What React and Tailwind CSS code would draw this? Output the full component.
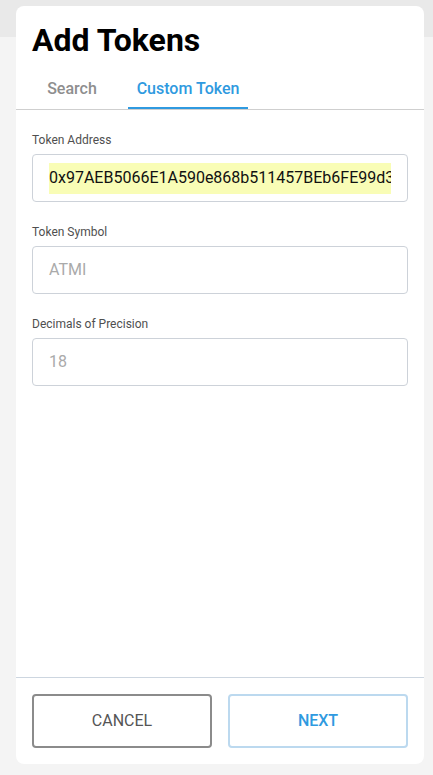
import React from 'react';

const Field = ({ label, children }) => (
  <div className="mb-[22px]">
    <div className="text-[12px] leading-4 text-[#4f4f4f]">{label}</div>
    <div className="mt-[6px] h-[48px] rounded-[4px] border border-[#cdd2d9] px-4 flex items-center overflow-hidden">
      {children}
    </div>
  </div>
);

const App = () => {
  return (
    <div className="min-h-screen bg-[linear-gradient(#e9e9e9_37px,#f4f4f4_37px)] pt-[6px] font-['Roboto',sans-serif]">
      <div className="ml-4 w-[408px] h-[758px] rounded-[8px] bg-white flex flex-col">
        <h1 className="px-4 pt-[18px] text-[32px] leading-8 font-bold text-black">Add Tokens</h1>

        <div className="mt-[14px] flex border-b border-[#cfcfcf]">
          <div className="ml-4 w-[80px] h-[39px] pt-px flex items-center justify-center border-b-2 border-transparent text-[16px] font-medium text-[#8e8e8e]">
            Search
          </div>
          <div className="ml-4 w-[120px] h-[39px] pt-px flex items-center justify-center border-b-2 border-[#2f9ae0] text-[16px] font-medium text-[#2f9ae0]">
            Custom Token
          </div>
        </div>

        <div className="flex-1 px-4 pt-[22px]">
          <Field label="Token Address">
            <div className="w-full h-[31px] bg-[#f9fdb6] flex items-center whitespace-nowrap overflow-hidden text-[16px] text-[#111]">
              0x97AEB5066E1A590e868b511457BEb6FE99d3
            </div>
          </Field>
          <Field label="Token Symbol">
            <span className="text-[16px] text-[#aaa]">ATMI</span>
          </Field>
          <Field label="Decimals of Precision">
            <span className="text-[16px] text-[#aaa]">18</span>
          </Field>
        </div>

        <div className="border-t border-[#cdd6e0] px-4 py-4 flex gap-4">
          <button className="flex-1 h-[54px] rounded-[4px] border-2 border-[#8b8b8b] text-[16px] text-[#555]">
            CANCEL
          </button>
          <button className="flex-1 h-[54px] rounded-[4px] border-2 border-[#bcd9ef] text-[16px] font-medium text-[#2f9ae0]">
            NEXT
          </button>
        </div>
      </div>
    </div>
  );
};

export default App;
